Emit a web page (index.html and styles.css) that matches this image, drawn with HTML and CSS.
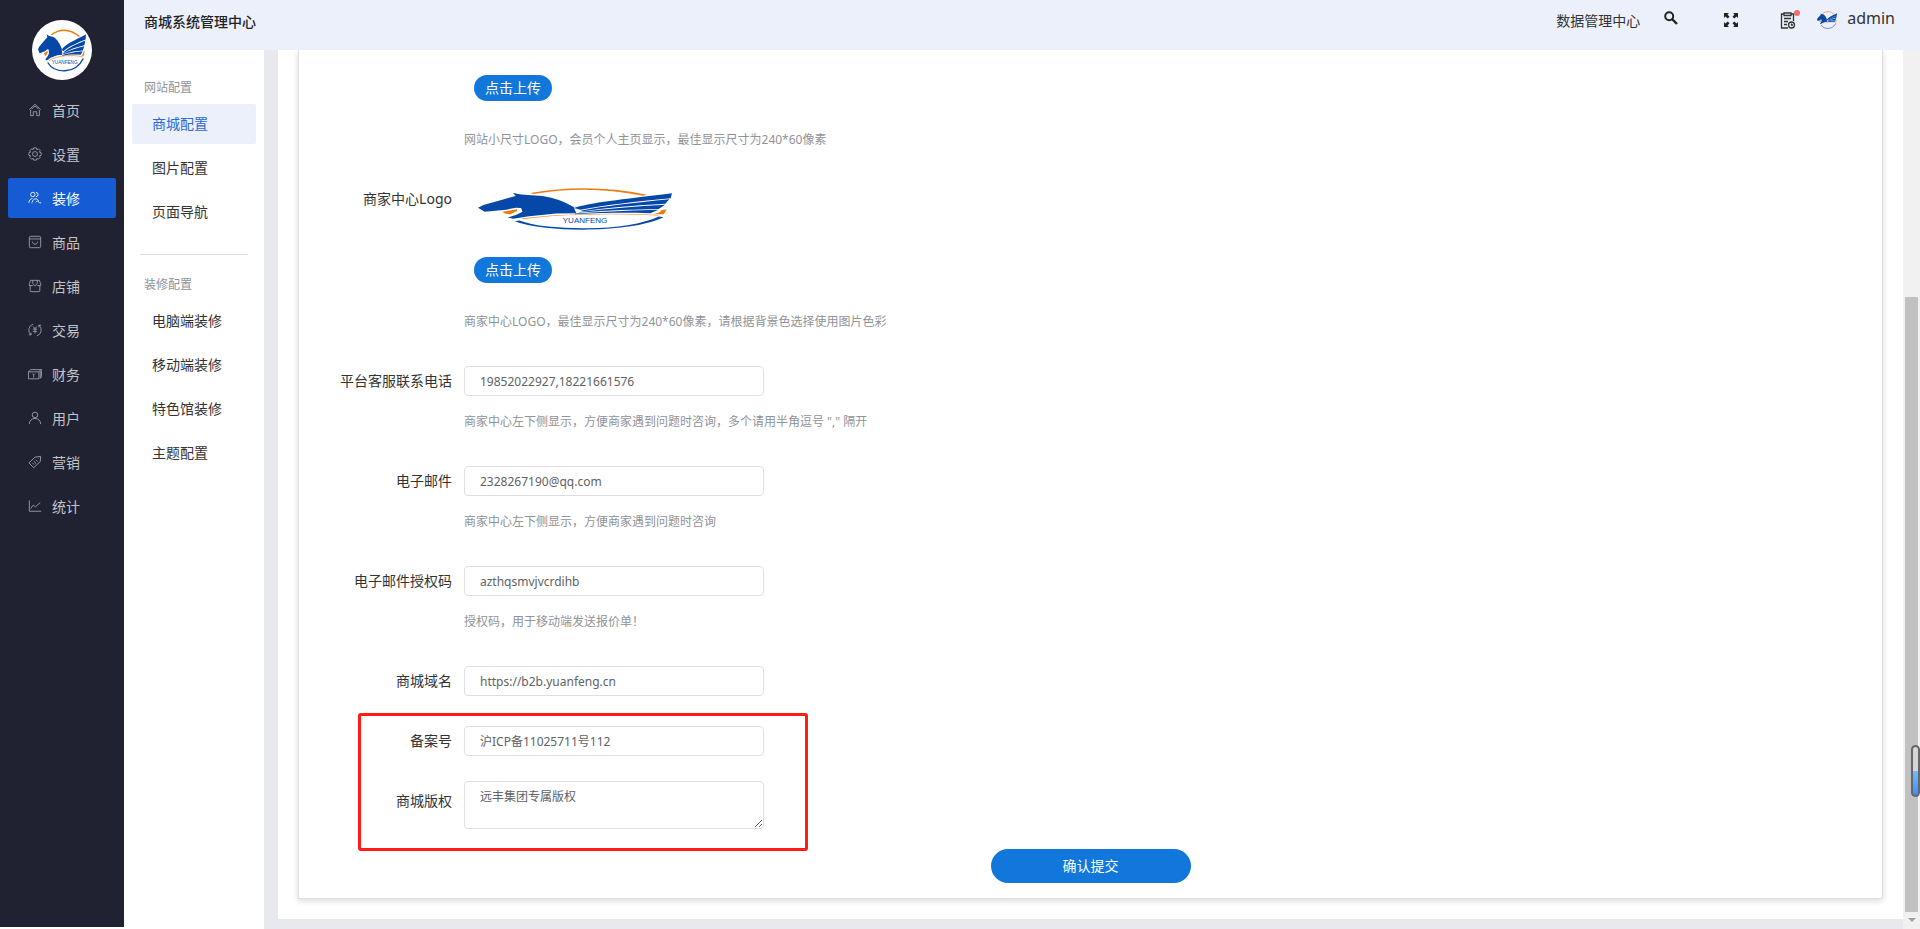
FILE: index.html
```html
<!DOCTYPE html>
<html lang="zh-CN">
<head>
  <meta charset="UTF-8">
  <title>商城系统管理中心</title>
  <link rel="stylesheet" href="styles.css">
</head>
<body>

  <!-- shared emblem -->
  <svg class="defs" width="0" height="0">
    <defs>
      <g id="horse">
        <path d="M40 17 Q81 -13 124 22" fill="none" stroke="#ee7b0e" stroke-width="4"/>
        <path d="M29 100 C50 134 112 136 136 88" fill="none" stroke="#0648a8" stroke-width="4"/>
        <path d="M33 94 C60 78 104 76 134 83" fill="none" stroke="#ee7b0e" stroke-width="2"/>
        <path d="M140 65 L138 80 L130 80 L135 74 L136 68Z" fill="#ee7b0e"/>
        <path d="M18 72 L29 65 L29 70 L24 80 L20 78Z" fill="#ee7b0e"/>
        <path d="M26 15 L32 20 L48 24 Q61 32 71 58 L73 77 L58 78 L38 86 L26 94 L22 90 L29 81 L33 72 L32 61 L28 60 L21 66 L11 70 L5 72 L0 60 L4 52 L16 38 L28 24Z" fill="#0648a8"/>
        <path d="M71 61 C84 44 105 36 144 16 L143 31 C116 42 96 50 76 66Z" fill="#0648a8"/>
        <path d="M76 69 C94 54 115 45 142 34 L139 48 C116 53 96 60 78 71Z" fill="#0648a8"/>
        <path d="M74 74 C96 62 118 56 139 51 L134 64 C115 65 98 68 76 75Z" fill="#0648a8"/>
        <path d="M72 78 C98 70 118 68 134 66 L128 77 C110 75 95 75 72 80Z" fill="#0648a8"/>
      </g>
    </defs>
  </svg>

  <div class="app">
    <nav class="sidebar">
      <div class="brand">
        <svg width="48" height="43" viewBox="0 0 144 128">
          <use href="#horse"/>
          <text x="80" y="104" class="brand-text">YUANFENG</text>
        </svg>
      </div>
      <a href="#"><svg class="icon" viewBox="0 0 16 16"><path d="M1.500 7.500 8 1.500l6.500 6M3 8v6.500h3V10h4v4.500h3V8M4 7l4-3.500L12 7"/></svg>首页</a>
      <a href="#"><svg class="icon" viewBox="0 0 16 16"><circle cx="8" cy="8" r="2.800"/><path d="M6.500 1h3l.6 1.900 1.800-.8 2 2-.8 1.800 1.900.6v3l-1.900.6.8 1.800-2 2-1.800-.8-.6 1.900h-3l-.6-1.900-1.800.8-2-2 .8-1.800L1 9.500v-3l1.900-.6-.8-1.800 2-2 1.800.8z"/></svg>设置</a>
      <a href="#" class="active"><svg class="icon" viewBox="0 0 16 16"><circle cx="5.500" cy="4" r="2.500"/><path d="M9 1.500a2.500 2.500 0 1 1 0 5M1 13.500c0-3 2-4.500 4-5M5 12.500c.5-2.500 2-3.500 4-3.500 1 0 2 .5 3 2M9 13l2-2 2 2.500h2M4 13.500h1"/></svg>装修</a>
      <a href="#"><svg class="icon" viewBox="0 0 16 16"><rect x="1.500" y="1.500" width="13" height="13" rx="1.500"/><path d="M1.500 4.500h13M5 7.500c0 4 6 4 6 0"/></svg>商品</a>
      <a href="#"><svg class="icon" viewBox="0 0 16 16"><path d="M3 1.500h10l1.500 4v2h-3.500l-1-1-2 1-2-1-1 1H1.500v-2zM5.500 1.500v4M10.500 1.500v4M2.500 8v5.500q0 1 1 1h9q1 0 1-1V8"/></svg>店铺</a>
      <a href="#"><svg class="icon" viewBox="0 0 16 16"><path d="M6 1.300a7 7 0 0 0-2.500 12.200M10 14.700a7 7 0 0 0 2.500-12.200M12.500 5V2.500H15M3.500 11v2.500H1M6 4l2 2.500L10 4M8 6.500V12M5.500 7h5M5.500 9.500h5"/></svg>交易</a>
      <a href="#"><svg class="icon" viewBox="0 0 16 16"><path d="M.5 5.500h12v8H.5zM.5 5.500 3 3h12.500v8L14 13V4.500M12.500 5.500l2-2.500M5 7.500l1.500 1.500L8 7.500M6.500 9v3"/></svg>财务</a>
      <a href="#"><svg class="icon" viewBox="0 0 16 16"><circle cx="8" cy="4.500" r="3.200"/><path d="M1.500 15c0-4 3-6.500 6.500-6.500s6.500 2.500 6.500 6.500"/></svg>用户</a>
      <a href="#"><svg class="icon" viewBox="0 0 16 16"><path d="M8 2.500 14.500 1.500 14 7.500 6.500 14.500 1 9zM5 9l2 2M7 7l2 3M9 5.500l2 2M11.500 4h.5"/></svg>营销</a>
      <a href="#"><svg class="icon" viewBox="0 0 16 16"><path d="M1.500 1.500v12.500H15M3 11l3-4 2.500 2L14 4"/></svg>统计</a>
    </nav>

    <div class="page">
      <header class="topbar">
        <h1>商城系统管理中心</h1>
        <div class="tools">
          <a href="#">数据管理中心</a>
          <button class="tool search" aria-label="搜索">
            <svg width="14" height="14" viewBox="0 0 14 14"><circle cx="5.200" cy="5.200" r="4" fill="none" stroke="#222" stroke-width="2"/><path d="M8 8l5 5" stroke="#222" stroke-width="2.400"/></svg>
          </button>
          <button class="tool full" aria-label="全屏">
            <svg width="14" height="14" viewBox="0 0 14 14"><path d="M0 0h5L3.500 1.500 5.500 3.700 3.700 5.500 1.500 3.500 0 5zM14 0v5l-1.500-1.500-2.200 2L8.500 3.700l2-2.200L9 0zM0 14V9l1.500 1.500 2.200-2 1.800 1.800-2 2.200L5 14zM14 14H9l1.500-1.500-2-2.200 1.800-1.800 2.200 2L14 9z" fill="#222"/></svg>
          </button>
          <button class="tool notice" aria-label="通知">
            <svg width="16" height="17" viewBox="0 0 16 17" fill="none" stroke="#333" stroke-width="1.300"><path d="M4 2H1.500v14H8M11 2h2.500v7M4 1h7v2.500H4zM4 6.500h7M4 9.500h4M4 12.500h3"/><circle cx="11.500" cy="13" r="3"/><path d="M11.500 11.500V13H13"/></svg>
          </button>
          <svg class="avatar" width="20" height="18" viewBox="0 0 144 128"><use href="#horse"/></svg>
          <a href="#" class="user">admin</a>
        </div>
      </header>

      <div class="body">
        <aside class="submenu">
          <h2>网站配置</h2>
          <a href="#" class="active">商城配置</a>
          <a href="#">图片配置</a>
          <a href="#">页面导航</a>
          <hr>
          <h2>装修配置</h2>
          <a href="#">电脑端装修</a>
          <a href="#">移动端装修</a>
          <a href="#">特色馆装修</a>
          <a href="#">主题配置</a>
        </aside>

        <main class="main">
          <div class="content">
            <form class="card">
              <div class="row">
                <div class="field">
                  <button type="button" class="upload">点击上传</button>
                  <p class="hint">网站小尺寸LOGO，会员个人主页显示，最佳显示尺寸为240*60像素</p>
                </div>
              </div>
              <div class="row">
                <span class="label">商家中心Logo</span>
                <div class="field">
                  <div class="preview">
                    <svg class="preview-img" viewBox="0 0 144 128" preserveAspectRatio="none"><use href="#horse"/></svg>
                    <span class="preview-text">YUANFENG</span>
                  </div>
                  <button type="button" class="upload">点击上传</button>
                  <p class="hint">商家中心LOGO，最佳显示尺寸为240*60像素，请根据背景色选择使用图片色彩</p>
                </div>
              </div>
              <div class="row">
                <label class="label" for="phone">平台客服联系电话</label>
                <div class="field">
                  <input type="text" id="phone" value="19852022927,18221661576">
                  <p class="hint">商家中心左下侧显示，方便商家遇到问题时咨询，多个请用半角逗号 "," 隔开</p>
                </div>
              </div>
              <div class="row">
                <label class="label" for="email">电子邮件</label>
                <div class="field">
                  <input type="text" id="email" value="2328267190@qq.com">
                  <p class="hint">商家中心左下侧显示，方便商家遇到问题时咨询</p>
                </div>
              </div>
              <div class="row">
                <label class="label" for="code">电子邮件授权码</label>
                <div class="field">
                  <input type="text" id="code" value="azthqsmvjvcrdihb">
                  <p class="hint">授权码，用于移动端发送报价单！</p>
                </div>
              </div>
              <div class="row plain">
                <label class="label" for="domain">商城域名</label>
                <div class="field"><input type="text" id="domain" value="https://b2b.yuanfeng.cn"></div>
              </div>
              <div class="marked">
                <div class="row">
                  <label class="label" for="icp">备案号</label>
                  <div class="field"><input type="text" id="icp" value="沪ICP备11025711号112"></div>
                </div>
                <div class="row tall">
                  <label class="label" for="copyright">商城版权</label>
                  <div class="field"><textarea id="copyright">远丰集团专属版权</textarea></div>
                </div>
              </div>
              <button type="submit" class="submit">确认提交</button>
            </form>
          </div>
        </main>

        <div class="scrollbar">
          <div class="thumb"></div>
          <div class="arrow"></div>
          <div class="gauge"></div>
        </div>
      </div>
    </div>
  </div>

</body>
</html>
```

FILE: styles.css
```css
* {
  box-sizing: border-box;
}

body {
  margin: 0;
  background-color: #fff;
  color: #333;
  font-family: "Noto Sans", "Noto Sans CJK SC", sans-serif;
  font-size: 14px;
}

a {
  color: inherit;
  text-decoration: none;
}

h1, h2, p {
  margin: 0;
}

button, input, textarea {
  font-family: inherit;
}

button {
  padding: 0;
  border: none;
  cursor: pointer;
}

.defs {
  position: absolute;
}

.app {
  display: flex;
  height: 100vh;
  overflow: hidden;
}

/* left menu */
.sidebar {
  width: 124px;
  flex-shrink: 0;
  margin-bottom: 2px;
  padding: 20px 8px 0;
  background-color: #202131;
}

.brand {
  display: flex;
  align-items: center;
  justify-content: center;
  width: 60px;
  height: 60px;
  margin: 0 auto 10px;
  background-color: #fff;
  border-radius: 50%;
}

.brand-text {
  font: 14px "Liberation Sans", sans-serif;
  fill: #0648a8;
  text-anchor: middle;
}

.sidebar a {
  display: flex;
  align-items: center;
  gap: 10px;
  height: 40px;
  margin-bottom: 4px;
  padding-left: 20px;
  color: #c4c4c9;
  border-radius: 2px;
}

.sidebar a.active {
  background-color: #155bd4;
  color: #fff;
}

.icon {
  width: 14px;
  height: 14px;
  fill: none;
  stroke: currentColor;
  stroke-width: 1;
  opacity: 0.8;
}

.active .icon {
  opacity: 1;
}

/* top bar */
.page {
  flex: 1;
  display: flex;
  flex-direction: column;
  min-width: 0;
}

.topbar {
  display: flex;
  justify-content: space-between;
  height: 50px;
  flex-shrink: 0;
  padding: 0 25px 0 20px;
  background-color: #ebf0fb;
}

.topbar h1 {
  font-size: 14px;
  font-weight: 500;
  line-height: 44px;
  color: #222;
}

.tools {
  display: flex;
  align-items: center;
  height: 40px;
}

.tool {
  position: relative;
  display: flex;
  background: none;
}

.search {
  margin: 0 46px 4px 24px;
}

.full {
  margin-right: 42px;
}

.notice {
  margin-right: 21px;
}

.notice::after {
  content: "";
  position: absolute;
  top: -2px;
  right: -4px;
  width: 6px;
  height: 6px;
  background-color: #f56c6c;
  border-radius: 50%;
}

.avatar {
  margin-right: 10px;
}

.user {
  font-size: 16px;
  line-height: 36px;
  margin-bottom: 4px;
}

/* second menu */
.body {
  flex: 1;
  display: flex;
  min-height: 0;
}

.submenu {
  width: 140px;
  flex-shrink: 0;
  padding: 28px 8px 0;
}

.submenu h2 {
  padding-left: 12px;
  margin-bottom: 6px;
  font-size: 12px;
  font-weight: 400;
  line-height: 20px;
  color: #909399;
}

.submenu a {
  display: block;
  margin-bottom: 4px;
  padding-left: 20px;
  line-height: 40px;
  border-radius: 2px;
}

.submenu a.active {
  background-color: #ebf0fb;
  color: #2a6bdc;
}

.submenu hr {
  height: 1px;
  margin: 22px 8px 20px;
  border: none;
  background-color: #e0e0e0;
}

/* form */
.main {
  flex: 1;
  overflow: hidden;
  padding: 0 0 10px 14px;
  background-color: #e8e9ee;
}

.content {
  height: 100%;
  padding: 0 20px 20px;
  background-color: #fff;
}

.card {
  height: 100%;
  padding-top: 25px;
  border: 1px solid #dcdde5;
  border-top: none;
  box-shadow: 0 2px 6px rgba(0, 0, 0, 0.15);
}

.row {
  display: flex;
  margin-bottom: 34px;
}

.label {
  width: 165px;
  padding-right: 12px;
  text-align: right;
  line-height: 30px;
}

.field {
  width: 600px;
}

.row:first-child > .field:first-child {
  margin-left: 165px;
}

.upload {
  display: block;
  width: 78px;
  height: 26px;
  margin: 0 0 29px 10px;
  background-color: #1177da;
  color: #fff;
  font-size: 14px;
  line-height: 26px;
  border-radius: 13px;
}

.preview {
  position: relative;
  width: 194px;
  height: 42px;
  margin: 4px 0 27px 14px;
}

.preview-img {
  display: block;
  width: 100%;
  height: 100%;
}

.preview-text {
  position: absolute;
  left: 0;
  right: 0;
  bottom: 4px;
  padding-left: 20px;
  color: #0648a8;
  font: 8px/10px "Liberation Sans", sans-serif;
  text-align: center;
}

input, textarea {
  display: block;
  width: 300px;
  height: 30px;
  padding: 0 15px;
  border: 1px solid #dcdfe6;
  border-radius: 4px;
  background-color: #fff;
  color: #606266;
  font-size: 12px;
}

textarea {
  height: 48px;
  padding: 5px 15px;
  line-height: 20px;
  resize: vertical;
}

.hint {
  font-size: 12px;
  line-height: 20px;
  color: #909399;
}

input + .hint {
  margin-top: 16px;
}

.plain {
  margin-bottom: 30px;
}

.marked {
  position: relative;
  margin-bottom: 20px;
}

.marked .row {
  margin-bottom: 25px;
}

.marked .tall {
  margin-bottom: 0;
}

.tall .label {
  line-height: 40px;
}

.marked::after {
  content: "";
  position: absolute;
  top: -13px;
  bottom: -22px;
  left: 59px;
  width: 450px;
  border: 3px solid #ff1c12;
  border-radius: 3px;
  pointer-events: none;
}

/* pseudo elements are not covered by the * rule */
.marked::after {
  box-sizing: border-box;
}

.submit {
  display: block;
  width: 200px;
  height: 34px;
  margin: 0 auto;
  background-color: #1177da;
  color: #fff;
  font-size: 14px;
  line-height: 34px;
  border-radius: 17px;
}

/* scrollbar */
.scrollbar {
  position: relative;
  display: flex;
  flex-direction: column;
  align-items: center;
  justify-content: flex-end;
  width: 17px;
  background-color: #f1f1f1;
}

.thumb {
  width: 13px;
  height: 70%;
  background-color: #c1c1c1;
}

.arrow {
  margin: 6px 0 7px;
  border: 4px solid transparent;
  border-top-color: #a0a0a0;
  border-bottom: none;
}

.gauge {
  position: absolute;
  right: 0;
  bottom: 132px;
  width: 9px;
  height: 52px;
  border: 2px solid #666;
  border-radius: 5px;
  background: linear-gradient(#d6d6d6 50%, #6cc0ff 50%, #3d8bff);
}
```
